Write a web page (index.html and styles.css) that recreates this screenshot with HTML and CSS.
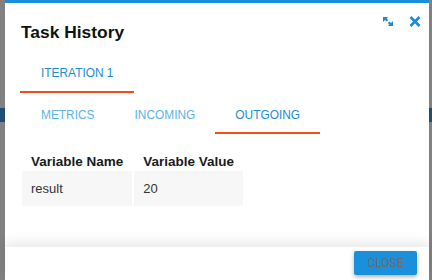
FILE: index.html
```html
<!DOCTYPE html>
<html lang="en">
  <head>
    <meta charset="UTF-8" />
    <meta name="viewport" content="width=device-width, initial-scale=1.0" />
    <title>Task History</title>
    <link rel="stylesheet" href="styles.css">
  </head>
  <body>
    <div class="modal">
      <div class="modal-header">
        <h2 class="modal-title">Task History</h2>
        <div class="modal-tools">
          <svg class="icon-expand" width="10" height="9" viewBox="0 0 10 9">
            <polygon points="0,0 5,0 3.6,1.4 5.2,3 3.6,4.6 2,3 0,5" />
            <polygon points="10,9 5,9 6.4,7.6 4.8,6 6.4,4.4 8,6 10,4" />
          </svg>
          <svg class="icon-close" width="12" height="11" viewBox="0 0 12 11">
            <path d="M1.5 1 L10.5 10 M10.5 1 L1.5 10" />
          </svg>
        </div>
      </div>

      <div class="modal-body">
        <ul class="tabs tabs-iteration">
          <li class="tab active">ITERATION 1</li>
        </ul>

        <ul class="tabs tabs-section">
          <li class="tab">METRICS</li>
          <li class="tab">INCOMING</li>
          <li class="tab active">OUTGOING</li>
        </ul>

        <table class="vars">
          <thead>
            <tr>
              <th>Variable Name</th>
              <th>Variable Value</th>
            </tr>
          </thead>
          <tbody>
            <tr>
              <td>result</td>
              <td>20</td>
            </tr>
          </tbody>
        </table>
      </div>

      <div class="modal-footer">
        <button type="button" class="btn-close">CLOSE</button>
      </div>
    </div>
  </body>
</html>
```

FILE: styles.css
```css
html, body {
  height: 100%;
}
body {
  margin: 0;
  overflow: hidden;
  font-family: "Liberation Sans", Arial, sans-serif;
  background: linear-gradient(to bottom, #818181 0, #818181 108px, #1f4e74 108px, #1f4e74 122px, #818181 122px);
}
.modal {
  box-sizing: border-box;
  height: 280px;
  margin: 0 3px 0 5px;
  background-color: white;
  border-top: 3px solid #1a8ed8;
  display: flex;
  flex-direction: column;
}
.modal-header {
  display: flex;
  justify-content: space-between;
  align-items: flex-start;
  padding: 13px 8px 0 16px;
}
.modal-title {
  margin: 6px 0 0 0;
  font-size: 17.4px;
  line-height: 20px;
  font-weight: bold;
  color: #111;
}
.modal-tools {
  display: flex;
  align-items: flex-start;
  gap: 16px;
}
.icon-expand {
  margin-top: 1px;
  fill: #1b8bd5;
}
.icon-close {
  stroke: #1b8bd5;
  stroke-width: 2.6;
  fill: none;
}
.modal-body {
  flex: 1;
  padding: 0 15px;
}
.tabs {
  list-style: none;
  margin: 0;
  padding: 0;
  display: flex;
}
.tab {
  font-size: 11.9px;
  line-height: 14px;
  color: #5ab4e6;
  border-bottom: 2px solid transparent;
}
.tab.active {
  color: #1e8cd4;
  border-bottom-color: #fc4a14;
}
.tabs-iteration {
  margin-top: 12px;
}
.tabs-iteration .tab {
  padding: 12px 21px 11px 21px;
}
.tabs-section {
  margin: 3px 0 0 1px;
}
.tabs-section .tab {
  padding: 12px 20px 10px 20px;
}
.vars {
  margin-top: 7px;
  border-collapse: separate;
  border-spacing: 2px 0;
}
.vars th {
  text-align: left;
  font-size: 13.5px;
  line-height: 18px;
  font-weight: bold;
  color: #1a1a1a;
  padding: 12px 9px 0 9px;
}
.vars td {
  font-size: 13px;
  line-height: 19px;
  color: #333;
  background-color: #f7f7f7;
  padding: 8px 9px;
}
.modal-footer {
  position: relative;
  height: 33px;
  box-sizing: border-box;
  padding: 4px 12px 0 0;
  display: flex;
  justify-content: flex-end;
  align-items: flex-start;
  background-color: white;
  box-shadow: 0 -5px 12px rgba(0, 0, 0, 0.09);
}
.btn-close {
  width: 63px;
  height: 24px;
  border: none;
  border-radius: 2px;
  background-color: #1a90dc;
  color: #6a6a6a;
  font-family: Roboto, sans-serif;
  font-size: 12px;
  padding: 0;
  box-shadow: 0 2px 4px rgba(0, 0, 0, 0.3);
  cursor: pointer;
}
```
